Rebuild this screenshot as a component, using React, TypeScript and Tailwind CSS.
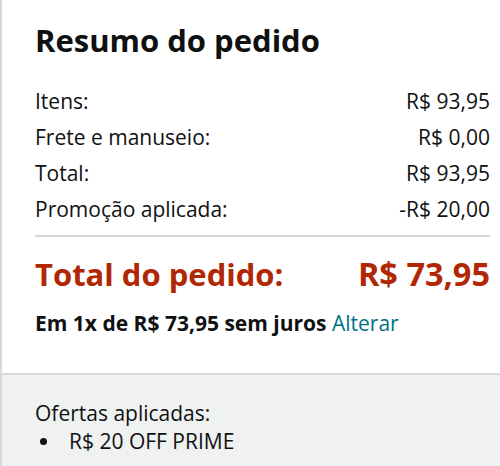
export default function App() {
  const rows = [
    { label: "Itens:", value: "R$ 93,95" },
    { label: "Frete e manuseio:", value: "R$ 0,00" },
    { label: "Total:", value: "R$ 93,95" },
    { label: "Promoção aplicada:", value: "-R$ 20,00" },
  ];

  return (
    <div
      className="w-[500px] h-[466px] bg-white border-l-2 border-[#d5d9d9] text-[#0f1111] overflow-hidden flex flex-col"
      style={{ fontFamily: '"Open Sans", Arial, sans-serif' }}
    >
      <div className="pl-[33px] pr-[10px] pt-[22px] pb-[38px]">
        <h1 className="text-[31px] leading-[36px] font-bold mb-[25px]">Resumo do pedido</h1>

        <div className="flex flex-col">
          {rows.map((row) => (
            <div key={row.label} className="flex justify-between text-[21px] leading-[24px] py-[6px]">
              <span>{row.label}</span>
              <span>{row.value}</span>
            </div>
          ))}
        </div>

        <div className="border-t-2 border-[#d5d9d9] mt-[8px]" />

        <div className="flex justify-between items-center text-[#b12704] font-bold leading-[36px] mt-[19px]">
          <span className="text-[31px]">Total do pedido:</span>
          <span className="text-[32.5px]">R$ 73,95</span>
        </div>

        <div className="text-[21px] leading-[24px] mt-[19px]">
          <span className="font-bold">Em 1x de R$ 73,95 sem juros</span>{" "}
          <a href="#" className="text-[#007185]">Alterar</a>
        </div>
      </div>

      <div className="flex-1 bg-[#f0f2f2] border-t-2 border-[#d5d9d9] pl-[33px] pr-[10px] pt-[24px] text-[21px] leading-[28px]">
        <p>Ofertas aplicadas:</p>
        <ul>
          <li className="flex items-center">
            <span className="w-[7px] h-[7px] rounded-full bg-[#0f1111] ml-[5px] mr-[22px]" />
            R$ 20 OFF PRIME
          </li>
        </ul>
      </div>
    </div>
  );
}
